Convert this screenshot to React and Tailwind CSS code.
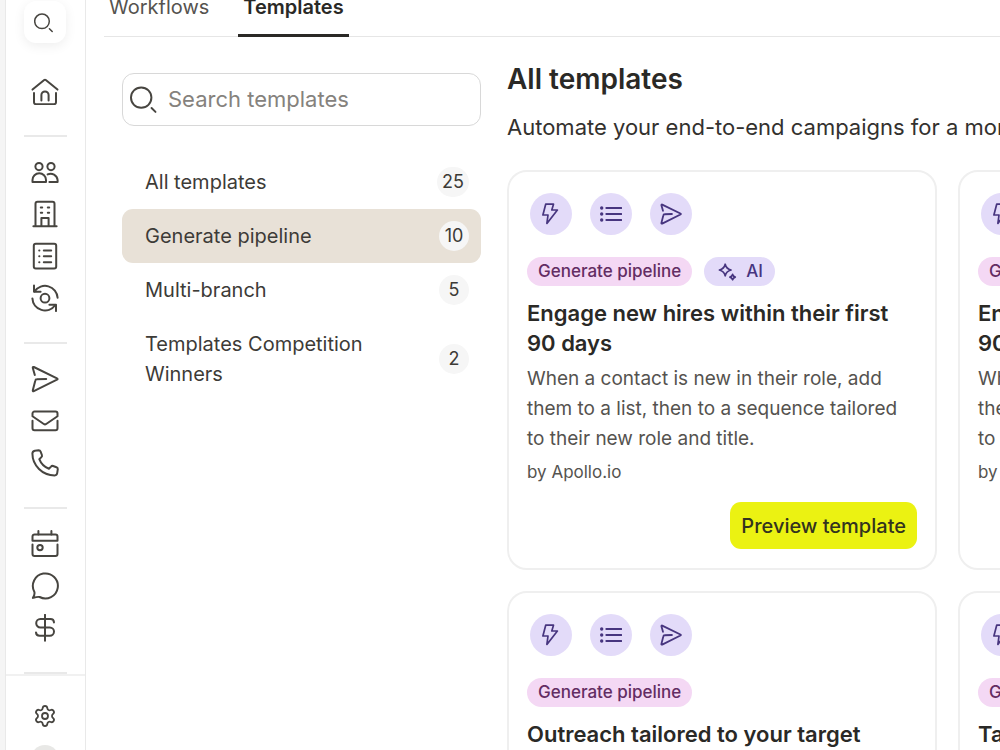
import { Settings } from 'lucide-react'

const categories = [
  { label: 'All templates', count: 25 },
  { label: 'Generate pipeline', count: 10, active: true },
  { label: 'Multi-branch', count: 5 },
  { label: 'Templates Competition Winners', count: 2 },
]

const engage = {
  title: 'Engage new hires within their first 90 days',
  text: 'When a contact is new in their role, add them to a list, then to a sequence tailored to their new role and title.',
}

const outreach = {
  title: 'Outreach tailored to your target',
  text: 'Reach the right people with a sequence tailored to their role.',
}

const templates = [
  { id: 1, ...engage, ai: true },
  { id: 2, ...engage, ai: true },
  { id: 3, ...outreach },
  { id: 4, title: 'Tailored outreach', text: outreach.text },
]

function Icon({ children, className = 'size-7', box = 28, width = 2 }) {
  return (
    <svg
      className={className}
      viewBox={`0 0 ${box} ${box}`}
      fill="none"
      stroke="currentColor"
      strokeWidth={width}
      strokeLinecap="round"
      strokeLinejoin="round"
      aria-hidden="true"
    >
      {children}
    </svg>
  )
}

function SearchIcon({ className, width }) {
  return (
    <Icon className={className} box={20} width={width}>
      <circle cx="8" cy="8.3" r="7.3" />
      <path d="m15.4 15.7 2.8 2.8" />
    </Icon>
  )
}

const sendPath = <path d="M3.8 10 1.8 2.9c-.2-.8.3-1.2 1-.9l23.2 11.3c.8.4.8 1 0 1.4L2.8 26.2c-.7.3-1.2-.1-1-.9L4.2 15.9c.2-1 .6-1.6 1.6-1.6L15.2 14" />

const navGroups = [
  [
    {
      label: 'Home',
      icon: (
        <>
          <path d="M1.5 12.6 13.2 3c.5-.4 1.1-.4 1.6 0l11.7 9.6" />
          <path d="M3 16v9.2a2 2 0 0 0 2 2h18a2 2 0 0 0 2-2V16" />
          <path d="M10.4 23.5V18a3.6 3.6 0 0 1 7.2 0v5.5" />
        </>
      ),
    },
  ],
  [
    {
      label: 'People',
      icon: (
        <>
          <circle cx="8" cy="8.6" r="3.6" />
          <circle cx="20" cy="8.6" r="3.6" />
          <path d="M1.5 24H15v-2a6.75 6.75 0 0 0-13.5 0z" />
          <path d="M16.6 16.4A7 7 0 0 1 26.6 22v2H18.4" />
        </>
      ),
    },
    {
      label: 'Companies',
      icon: (
        <>
          <path d="M4.5 26V3.8a2 2 0 0 1 2-2h15a2 2 0 0 1 2 2V26" />
          <path d="M2.4 26.2h23.2" />
          <path d="M10.4 26v-8h7.2v8" />
          <path d="M9.8 7.6h1.4M16.8 7.6h1.4M9.8 12.8h1.4M16.8 12.8h1.4" />
        </>
      ),
    },
    {
      label: 'Lists',
      icon: (
        <>
          <rect x="2.8" y="1.8" width="22.4" height="24.8" rx="2" />
          <path d="M8.2 8.4h.2M8.2 14.3h.2M8.2 20.2h.2M12.8 8.4h7.4M12.8 14.3h7.4M12.8 20.2h7.4" />
        </>
      ),
    },
    {
      label: 'Data enrichment',
      icon: (
        <>
          <circle cx="14" cy="14.2" r="4.4" />
          <path d="M3 1.4v6.4h6.6" />
          <path d="M3.6 7.4A12.6 12.6 0 0 1 26.6 13.8" />
          <path d="M1.4 14.4a12.6 12.6 0 0 0 22.8 6.8" />
          <path d="M18.4 20.7H25v6.4" />
        </>
      ),
    },
  ],
  [
    { label: 'Sequences', icon: sendPath },
    {
      label: 'Emails',
      icon: (
        <>
          <path d="M1.5 9.2V6.6a2 2 0 0 1 2-2h21a2 2 0 0 1 2 2v2.6l-11.3 7.8a2.2 2.2 0 0 1-2.4 0z" />
          <path d="M1.5 13.8v7.4a2 2 0 0 0 2 2h21a2 2 0 0 0 2-2v-7.4" />
        </>
      ),
    },
    {
      label: 'Calls',
      icon: (
        <path d="M3.8 1.8 7.7 1.3c1 0 1.6.5 1.9 1.3L10.9 6c.3.8.1 1.5-.5 2.1l-2.1 2.1c1.6 4.2 5 7.8 9.6 9.6l2.1-2.2c.6-.7 1.3-.9 2.1-.6l3.4 1.3c.9.3 1.3 1 1.3 1.9l-.6 4c-.2 1.3-1.1 2.2-2.5 2.2C11.5 26.4 1.4 16.5 1.4 4.6c0-1.5 1-2.5 2.4-2.8z" />
      ),
    },
  ],
  [
    {
      label: 'Meetings',
      icon: (
        <>
          <path d="M7.4 1v3.4M20.4 1v3.4" />
          <path d="M1.5 10.8V6.4a2 2 0 0 1 2-2h21a2 2 0 0 1 2 2v4.4z" />
          <path d="M1.5 14.4V24a2 2 0 0 0 2 2h21a2 2 0 0 0 2-2v-9.6" />
          <circle cx="9" cy="17.6" r="2.7" />
        </>
      ),
    },
    {
      label: 'Conversations',
      icon: <path d="M1.9 25.9c1.3-1.9 1.9-3.9 1.5-6A12.5 12.5 0 1 1 8.6 25c-2-.5-4.2.2-6.7.9z" />,
    },
    {
      label: 'Deals',
      icon: (
        <>
          <path d="M14 .8v26" />
          <path d="M23 8.4A3.6 3.6 0 0 0 19.4 5H9.4a4.2 4.2 0 0 0 0 8.4h9.4a4.2 4.2 0 0 1 0 8.4H8.6A3.6 3.6 0 0 1 5 18.4" />
        </>
      ),
    },
  ],
]

function Sidebar() {
  return (
    <nav aria-label="Main" className="flex w-[81px] shrink-0 flex-col border-x border-[#e9e9e9] text-[#474540]">
      <div className="flex min-h-0 flex-1 flex-col items-center overflow-hidden pt-px pr-px">
        <button aria-label="Search" className="flex size-[42px] shrink-0 items-center justify-center rounded-xl bg-white pt-0.5 pr-0.5 shadow-[0_3px_12px_rgba(0,0,0,0.07)]">
          <SearchIcon className="size-5" width={1.5} />
        </button>
        <div className="mt-[27px] flex flex-col">
          {navGroups.map((group, i) => (
            <div key={i} className="flex flex-col items-center">
              {group.map(item => (
                <a key={item.label} href="#" aria-label={item.label} className="flex size-[42px] items-center justify-center">
                  <Icon>{item.icon}</Icon>
                </a>
              ))}
              <div className="mt-[23px] mb-[14px] h-0.5 w-[43px] bg-[#e9e9e9]" />
            </div>
          ))}
        </div>
      </div>
      <div className="flex h-[76px] shrink-0 flex-col items-center overflow-hidden border-t-2 border-[#f1f1f1] pt-7 pr-px">
        <a href="#" aria-label="Settings">
          <Settings size={24} strokeWidth={1.8} />
        </a>
        <div className="mt-[17px] size-7 shrink-0 rounded-full bg-[#e8e8e6]" />
      </div>
    </nav>
  )
}

function Bubble({ children }) {
  return (
    <span className="flex size-[42px] items-center justify-center rounded-full bg-[#e3dbf9] text-[#47357f]">
      {children}
    </span>
  )
}

function TemplateCard({ template }) {
  return (
    <article className="flex min-h-[400px] flex-col rounded-[20px] border-2 border-[#efefef] px-[18px] pt-[21px] pb-[19px]">
      <div className="flex gap-[18px] px-[3px]">
        <Bubble>
          <Icon className="size-[22px]" box={22} width={1.7}>
            <path d="M5.7 1.2h7.8L11.8 7h5.6L6.9 20.4 8 12H2.9z" />
          </Icon>
        </Bubble>
        <Bubble>
          <Icon className="size-[22px]" box={22} width={1.9}>
            <path d="M6.3 5h15M6.3 11h15M6.3 17h15" />
            <g fill="currentColor" stroke="none">
              <circle cx="1.7" cy="5" r="1.7" />
              <circle cx="1.7" cy="11" r="1.7" />
              <circle cx="1.7" cy="17" r="1.7" />
            </g>
          </Icon>
        </Bubble>
        <Bubble>
          <Icon className="size-[22px]" width={2.3}>{sendPath}</Icon>
        </Bubble>
      </div>

      <div className="mt-[22px] flex gap-3 text-[17px] leading-[29px] font-medium">
        <span className="rounded-full bg-[#f4d8f4] px-[11px] text-[#632d63]">Generate pipeline</span>
        {template.ai && (
          <span className="flex items-center gap-2 rounded-full bg-[#e3dbf9] pr-3 pl-[14px] text-[#47357f]">
            <Icon className="size-5" box={20} width={1.7}>
              <path d="M7.2 2.2c.9 3.6 2.2 4.9 5.8 5.8-3.6.9-4.9 2.2-5.8 5.8-.9-3.6-2.2-4.9-5.8-5.8 3.6-.9 4.9-2.2 5.8-5.8z" />
              <path d="M14.6 12.4c.5 1.6 1.1 2.2 2.7 2.7-1.6.5-2.2 1.1-2.7 2.7-.5-1.6-1.1-2.2-2.7-2.7 1.6-.5 2.2-1.1 2.7-2.7z" />
            </Icon>
            AI
          </span>
        )}
      </div>

      <h2 className="mt-3 text-[22px] leading-[30px] font-semibold text-[#2a2926]">{template.title}</h2>
      <p className="mt-1.5 text-[19px] leading-[30px] text-[#55534f]">{template.text}</p>
      <p className="mt-1.5 text-[17px] leading-6 text-[#55534f]">by Apollo.io</p>
      <button className="mt-auto h-[47px] self-end rounded-[11px] bg-[#ebf212] px-[11px] text-[20px] font-medium text-[#33331f]">
        Preview template
      </button>
    </article>
  )
}

export default function App() {
  return (
    <div className="flex h-screen overflow-hidden bg-white font-['Inter',sans-serif] text-[#2a2926]">
      <div className="w-[5px] shrink-0 bg-[#f5f5f5]" />
      <Sidebar />
      <main className="min-w-0 flex-1 overflow-hidden pl-[18px]">
        <div className="flex gap-6 border-b border-[#e6e6e6] text-[20px] leading-[14px]">
          <a href="#" className="px-[5px] text-[#55534f]">Workflows</a>
          <a href="#" className="-mb-px border-b-[3px] border-[#2a2926] px-[5px] pb-5 font-semibold">Templates</a>
        </div>

        <div className="flex gap-[26px] pt-9 pl-[18px]">
          <aside className="w-[359px] shrink-0">
            <label className="flex h-[53px] items-center gap-2.5 rounded-xl border border-[#d8d8d8] px-[7px]">
              <SearchIcon className="size-7 shrink-0 text-[#474540]" width={1.4} />
              <input
                type="search"
                aria-label="Search templates"
                placeholder="Search templates"
                className="min-w-0 flex-1 text-[22px] outline-none placeholder:text-[#85827d]"
              />
            </label>
            <div className="mt-[29px] flex flex-col">
              {categories.map(c => (
                <button
                  key={c.label}
                  className={`flex items-center justify-between rounded-[11px] py-3 pr-3 pl-[23px] text-left text-[20px] leading-[30px] text-[#3d3b37] ${c.active ? 'bg-[#e8e1d7]' : ''}`}
                >
                  <span className="max-w-[240px]">{c.label}</span>
                  <span className="flex h-[30px] min-w-[30px] items-center justify-center rounded-full bg-[#f6f6f6] px-[5px] text-[18px]">{c.count}</span>
                </button>
              ))}
            </div>
          </aside>

          <section className="min-w-0 flex-1">
            <h1 className="-mt-2.5 text-[28px] leading-8 font-semibold">All templates</h1>
            <p className="mt-4 text-[22px] leading-8 whitespace-nowrap text-[#33312e]">
              Automate your end-to-end campaigns for a more efficient workflow.
            </p>
            <div className="mt-[27px] grid grid-cols-[430px_430px] gap-[21px]">
              {templates.map(t => (
                <TemplateCard key={t.id} template={t} />
              ))}
            </div>
          </section>
        </div>
      </main>
    </div>
  )
}
